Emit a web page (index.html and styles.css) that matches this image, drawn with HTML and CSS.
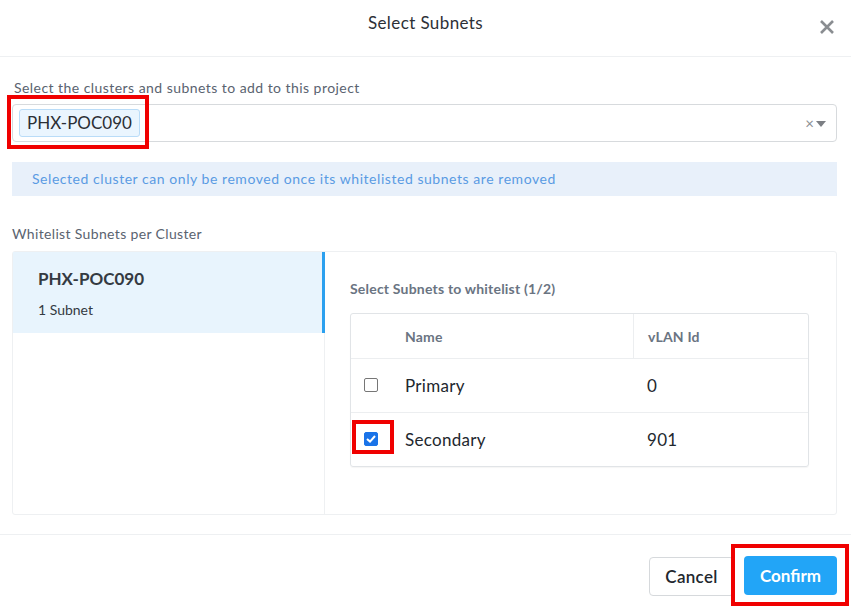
FILE: index.html
```html
<!DOCTYPE html>
<html>
<head>
<meta charset="utf-8">
<link rel="stylesheet" href="styles.css">
</head>
<body>
<div class="modal">
  <header class="modal-header">
    <h1 class="modal-title">Select Subnets</h1>
    <button class="close-btn" aria-label="Close">
      <svg width="16" height="16" viewBox="0 0 16 16"><path d="M2 2 L14 14 M14 2 L2 14" stroke="#8a8d91" stroke-width="2.6" stroke-linecap="butt"/></svg>
    </button>
  </header>

  <main class="modal-body">
    <label class="field-label">Select the clusters and subnets to add to this project</label>
    <div class="select-box">
      <span class="tag highlight hl-tag">PHX-POC090</span>
      <span class="select-icons">
        <span class="clear">×</span>
        <svg class="caret" width="10" height="6" viewBox="0 0 10 6"><path d="M0 0 H10 L5 6 Z" fill="#7c7f84"/></svg>
      </span>
    </div>

    <div class="info-banner">Selected cluster can only be removed once its whitelisted subnets are removed</div>

    <div class="section-label">Whitelist Subnets per Cluster</div>

    <div class="panel">
      <aside class="cluster-list">
        <div class="cluster-item active">
          <div class="cluster-name">PHX-POC090</div>
          <div class="cluster-count">1 Subnet</div>
        </div>
      </aside>
      <section class="subnet-pane">
        <div class="pane-title">Select Subnets to whitelist (1/2)</div>
        <div class="subnet-table">
          <div class="row head">
            <div class="cell check"></div>
            <div class="cell name">Name</div>
            <div class="cell vlan">vLAN Id</div>
          </div>
          <div class="row">
            <div class="cell check"><span class="checkbox"></span></div>
            <div class="cell name">Primary</div>
            <div class="cell vlan">0</div>
          </div>
          <div class="row">
            <div class="cell check"><span class="checkbox checked highlight hl-check"><svg width="10" height="8" viewBox="0 0 10 8"><path d="M1 4 L4 6.6 L9 1" fill="none" stroke="#fff" stroke-width="2"/></svg></span></div>
            <div class="cell name">Secondary</div>
            <div class="cell vlan">901</div>
          </div>
        </div>
      </section>
    </div>
  </main>

  <footer class="modal-footer">
    <button class="btn btn-cancel">Cancel</button>
    <button class="btn btn-confirm highlight hl-btn">Confirm</button>
  </footer>
</div>
</body>
</html>
```

FILE: styles.css
```css
* { box-sizing: border-box; }
html, body { margin: 0; padding: 0; background: #fff; }
body {
  font-family: Lato, "Open Sans", "Liberation Sans", sans-serif;
  color: #22272e;
  width: 851px;
  height: 608px;
  overflow: hidden;
}
.modal { display: flex; flex-direction: column; height: 608px; }

.modal-header {
  height: 57px;
  border-bottom: 1px solid #eef0f2;
  display: flex;
  align-items: center;
  justify-content: center;
  position: relative;
}
.modal-title {
  margin: 0;
  font-size: 17px;
  letter-spacing: 0.4px;
  font-weight: 400;
  color: #2c3036;
  line-height: 20px;
  padding-bottom: 10px;
}
.close-btn {
  position: absolute;
  right: 16px;
  top: 19px;
  border: 0;
  background: none;
  padding: 0;
  width: 16px;
  height: 16px;
  line-height: 0;
}

.modal-body { padding: 23px 14px 0 12px; display: flex; flex-direction: column; }
.field-label {
  font-size: 14px;
  letter-spacing: 0.45px;
  color: #5a6370;
  padding-left: 2px;
  line-height: 16px;
}
.select-box {
  margin-top: 8px;
  height: 38px;
  border: 1px solid #d7dadd;
  border-radius: 4px;
  display: flex;
  align-items: center;
  justify-content: space-between;
  padding: 0 10px 0 6px;
}
.tag {
  display: inline-block;
  height: 28px;
  line-height: 26px;
  padding: 0 7px;
  background: #eaf5fe;
  border: 1px solid #b9dcf8;
  border-radius: 3px;
  font-size: 17px;
  color: #2b2f35;
}
.select-icons { display: flex; align-items: center; gap: 2px; color: #8c8f93; }
.clear { font-size: 15px; line-height: 1; }
.caret { margin-top: 1px; }

.info-banner {
  margin-top: 20px;
  height: 34px;
  background: #e8f0fa;
  color: #5a9be3;
  font-size: 14px;
  letter-spacing: 0.55px;
  line-height: 34px;
  padding-left: 20px;
}
.section-label {
  margin-top: 30px;
  font-size: 14px;
  letter-spacing: 0.35px;
  color: #5a6370;
  line-height: 16px;
}
.panel {
  margin-top: 9px;
  height: 264px;
  border: 1px solid #eef0f2;
  border-radius: 3px;
  display: flex;
}
.cluster-list {
  width: 312px;
  border-right: 1px solid #eef0f2;
}
.cluster-item {
  height: 81px;
  padding: 17px 0 0 25px;
}
.cluster-item.active {
  background: #e8f4fd;
  border-right: 3px solid #2ba0ef;
  margin-right: -1px;
}
.cluster-name { font-size: 17px; font-weight: 700; color: #343a42; line-height: 20px; }
.cluster-count { margin-top: 13px; font-size: 14px; color: #343a42; line-height: 16px; }

.subnet-pane { flex: 1; padding: 29px 27px 0 25px; }
.pane-title { font-size: 14px; letter-spacing: 0.2px; font-weight: 700; color: #6a7482; line-height: 16px; }
.subnet-table {
  margin-top: 16px;
  border: 1px solid #e1e4e7;
  border-radius: 3px;
  box-shadow: 0 1px 1px rgba(0,0,0,0.04);
}
.row { display: flex; height: 54px; border-top: 1px solid #eceef0; align-items: center; }
.row.head { height: 44px; border-top: 0; }
.cell { height: 100%; display: flex; align-items: center; font-size: 17px; letter-spacing: 0.3px; color: #22272e; }
.cell.check { width: 54px; padding-left: 13px; }
.cell.name { width: 228px; }
.cell.vlan { flex: 1; padding-left: 14px; }
.row.head .cell { font-size: 14px; letter-spacing: 0.2px; font-weight: 700; color: #6a7482; }
.row.head .cell.vlan { border-left: 1px solid #eceef0; }

.checkbox {
  width: 14px; height: 14px;
  border: 1px solid #767676;
  border-radius: 2px;
  display: inline-flex;
  align-items: center;
  justify-content: center;
  margin-top: -2px;
}
.checkbox.checked { background: #1a73e8; border-color: #1a73e8; }

.modal-footer {
  margin-top: 19px;
  border-top: 1px solid #eef0f2;
  display: flex;
  justify-content: flex-end;
  gap: 10px;
  padding: 22px 14px 0 0;
}
.btn {
  font-family: inherit;
  font-size: 17px;
  height: 39px;
  border-radius: 4px;
  cursor: pointer;
}
.btn-cancel {
  width: 85px;
  background: #fff;
  border: 1px solid #d6d9dc;
  color: #22272e;
  font-weight: 600;
  letter-spacing: 0.3px;
}
.btn-confirm {
  width: 93px;
  background: #22a5f7;
  border: 0;
  color: #fff;
  font-weight: 700;
  margin-top: -1px;
}

/* red annotation boxes */
.highlight { position: relative; }
.highlight::after {
  content: "";
  position: absolute;
  border: 4px solid #f00000;
  pointer-events: none;
}
.hl-tag::after { left: -13px; top: -15px; right: -10px; bottom: -13px; }
.hl-check::after { left: -13px; top: -13px; right: -17px; bottom: -9px; }
.hl-btn::after { left: -13px; top: -12px; right: -12px; bottom: -11px; }
```
